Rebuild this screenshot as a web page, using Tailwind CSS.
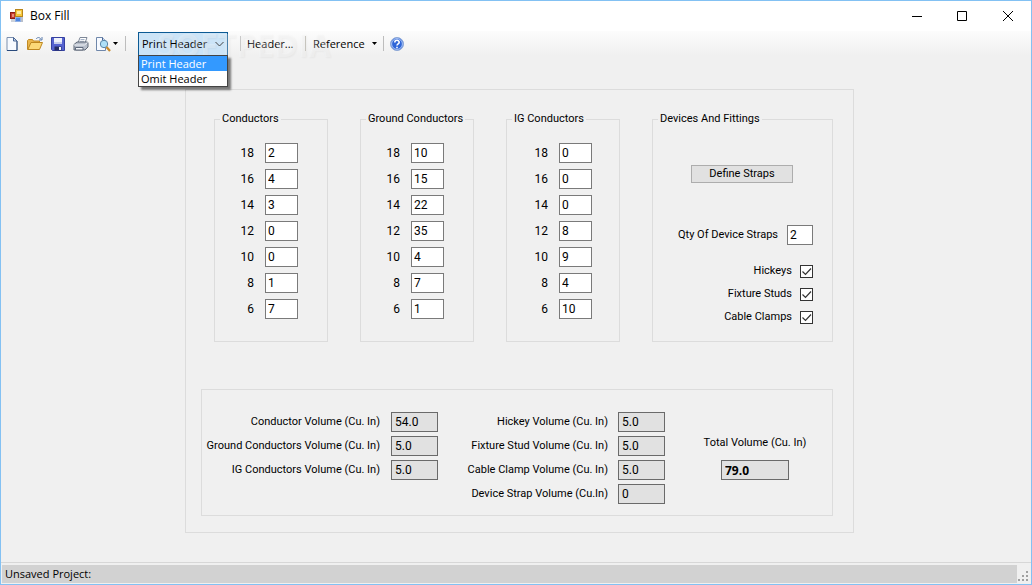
<!DOCTYPE html>
<html lang="en">
<head>
<meta charset="utf-8">
<title>Box Fill</title>
<script src="https://cdn.jsdelivr.net/npm/@tailwindcss/browser@4"></script>
</head>
<body class="bg-[#f0f0f0]">
<div class="flex min-h-screen flex-col border border-[#83c1f3] bg-[#f0f0f0] font-['Roboto','Liberation_Sans',sans-serif] text-[11px] leading-4 text-black">

  <header class="flex h-[30px] items-center bg-white font-['Open_Sans',sans-serif] text-[12px]">
    <svg class="ml-2 size-4 shrink-0" viewBox="0 0 16 16" aria-hidden="true">
      <rect x="1.5" y="4.500" width="5" height="6" fill="#c33a2c" stroke="#8d1d14"/><rect x="3" y="6" width="2" height="3" fill="#e98b7c"/>
      <rect x="2" y="11" width="4" height="3" fill="#cdd2da"/>
      <rect x="11" y="9" width="3" height="5" fill="#b9bfca"/>
      <rect x="6.500" y="9.500" width="5" height="4" fill="#4f86e0" stroke="#8fb0e6"/>
      <rect x="6.500" y="1.500" width="7" height="7" fill="#f6c73c" stroke="#b8861b"/><rect x="8" y="3" width="4" height="3" fill="#fdeaa0"/>
    </svg>
    <h1 class="ml-[5px] grow">Box Fill</h1>
    <button type="button" aria-label="Minimize" class="flex h-full w-[46px] items-center justify-center"><svg class="size-[11px]" viewBox="0 0 11 11" stroke="#000" fill="none"><path d="M1 5.500h10"/></svg></button>
    <button type="button" aria-label="Maximize" class="flex h-full w-[46px] items-center justify-center"><svg class="size-[11px]" viewBox="0 0 11 11" stroke="#000" fill="none"><path d="M.5 .5h9v9h-9z"/></svg></button>
    <button type="button" aria-label="Close" class="flex h-full w-[46px] items-center justify-center"><svg class="size-[11px]" viewBox="0 0 11 11" stroke="#000" fill="none"><path d="M0 0l10 10M10 0l-10 10"/></svg></button>
  </header>

  <nav class="relative flex h-[25px] items-center bg-linear-to-b from-[#fcfcfc] to-[#f0f0f0] font-['Open_Sans',sans-serif]" aria-label="Toolbar">
    <div class="pointer-events-none absolute left-[156px] top-0 z-20 text-[32px] leading-[28px] font-bold text-white/25 text-shadow-[1px_1px_2px_rgb(0_0_0/0.04)]" aria-hidden="true">SOFTPEDIA</div>
    <div class="ml-[3px] flex gap-[7px]">
      <button type="button" aria-label="New" class="size-4"><svg viewBox="0 0 16 16"><path d="M3 1.500h6.500l3.500 3.500v9.500H3z" fill="#f7faff" stroke="#7b8fae"/><path d="M13 5v9.500H3" fill="none" stroke="#294a7c"/><path d="M9.500 1.500V5H13z" fill="#c7d6ec" stroke="#4a6795"/></svg></button>
      <button type="button" aria-label="Open" class="size-4"><svg viewBox="0 0 16 16"><path d="M.5 13.500v-9l1-1h4l1 1.500h6v3" fill="#e9b54c" stroke="#c28a23"/><path d="M.8 13.500L4 6.500h11.500l-3 7z" fill="#fbd877" stroke="#bd861f"/><path d="M9 3c1.500-2 4-2 5 .5M15 1v3h-3" fill="none" stroke="#5f7fae"/></svg></button>
      <button type="button" aria-label="Save" class="size-4"><svg viewBox="0 0 16 16"><path d="M1.500 1.500h13v13h-12l-1-1z" fill="#5562d0" stroke="#3540a0"/><path d="M4 2h8v6H4z" fill="#eef1fb"/><path d="M4 6h8v2H4z" fill="#c4cbec"/><path d="M4.500 10.500h7v4h-7z" fill="#252c66"/><path d="M9 11h2v3H9z" fill="#f1f2f8"/></svg></button>
      <button type="button" aria-label="Print" class="size-4"><svg viewBox="0 0 16 16"><path d="M5 7l2-5.500h7L12 7z" fill="#fff" stroke="#7d8797"/><path d="M7.500 3.500h4M7 5.300h4" stroke="#a5b3c8"/><path d="M1 8.500l3-2.500h10.500l.5 1v4l-3 3H1z" fill="#b8bfcb" stroke="#5f6876"/><path d="M1 9h10.500l3-2.500" fill="none" stroke="#eef1f5"/><path d="M2.500 11.500H10v2.500H2.500z" fill="#f5f7fa" stroke="#606b7d"/></svg></button>
      <button type="button" aria-label="Print preview" class="-ml-px flex h-4 items-center"><svg class="size-4" viewBox="0 0 16 16"><path d="M1.500 1.500h6l3 3v10h-9z" fill="#f7faff" stroke="#6f87aa"/><path d="M7.500 1.500v3h3" fill="#cddaf0" stroke="#4a6795"/><circle cx="9" cy="8" r="3.700" fill="#aee0f8" stroke="#5a86a8"/><path d="M11.500 11l3.500 4" stroke="#c78a2c" stroke-width="2.200"/></svg><svg class="ml-0.5 h-[3px] w-[5px]" viewBox="0 0 5 3"><path d="M0 0h5L2.500 3z"/></svg></button>
    </div>
    <div class="ml-[7px] h-[15px] w-px bg-[#bdbdbd]"></div>
    <div class="relative ml-3 h-6 w-[90px]">
      <select aria-label="Header mode" class="h-6 w-full appearance-none border border-[#0c5a94] bg-[#cce4f7] pl-[3px] text-[11px]">
        <option selected>Print Header</option>
        <option>Omit Header</option>
      </select>
      <svg class="pointer-events-none absolute right-1 top-[9px] h-[7px] w-[9px]" viewBox="0 0 9 7" fill="none" stroke="#444"><path d="M.5 1l4 4 4-4"/></svg>
      <ul role="listbox" aria-label="Header mode options" class="absolute left-0 top-[23px] z-30 w-full border border-[#444] bg-white shadow-[3px_3px_2px_rgba(0,0,0,0.5)]">
        <li role="option" aria-selected="true" class="h-[15px] bg-[#3399ff] pl-0.5 leading-[15px] text-white">Print Header</li>
        <li role="option" aria-selected="false" class="h-[15px] pl-0.5 leading-[15px]">Omit Header</li>
      </ul>
    </div>
    <div class="ml-3 h-[15px] w-px bg-[#bdbdbd]"></div>
    <button type="button" class="ml-1.5 w-[50px] whitespace-nowrap text-left">Header...</button>
    <div class="ml-2 h-[15px] w-px bg-[#bdbdbd]"></div>
    <button type="button" class="ml-[7px] flex w-16 items-center justify-between whitespace-nowrap">Reference<svg class="h-[3px] w-[5px] shrink-0" viewBox="0 0 5 3"><path d="M0 0h5L2.500 3z"/></svg></button>
    <div class="ml-1.5 h-[15px] w-px bg-[#bdbdbd]"></div>
    <button type="button" aria-label="Help" class="ml-[5px] size-4"><svg viewBox="0 0 16 16"><circle cx="8" cy="8" r="6.500" fill="#2f66d8" stroke="#8fa9d6"/><circle cx="8" cy="8" r="5.400" fill="none" stroke="#cfe0fb" stroke-width=".8"/><path d="M5.800 6.500c0-3 4.400-2.800 4.400-.3C10.200 7.800 8 7.800 8 9.600M8 10.800v1.500" fill="none" stroke="#fff" stroke-width="1.600"/></svg></button>
  </nav>

  <main class="flex grow justify-center pt-[33px] pb-[29px] pl-[7px]">
    <div class="w-[669px] border border-[#dcdcdc] pr-5 pl-7 pt-[21px] pb-4">
      <div class="grid grid-cols-[114px_114px_114px_181px] gap-8">
        <fieldset class="h-[231px] border border-[#dcdcdc]">
          <legend class="ml-[5px] whitespace-nowrap px-0.5">Conductors</legend>
          <div class="mt-4 grid grid-cols-[39px_33px] gap-x-[11px] gap-y-1.5 text-right text-[12px]" data-values="2,4,3,0,0,1,7"></div>
        </fieldset>
        <fieldset class="h-[231px] border border-[#dcdcdc]">
          <legend class="ml-[5px] whitespace-nowrap px-0.5">Ground Conductors</legend>
          <div class="mt-4 grid grid-cols-[39px_33px] gap-x-[11px] gap-y-1.5 text-right text-[12px]" data-values="10,15,22,35,4,7,1"></div>
        </fieldset>
        <fieldset class="h-[231px] border border-[#dcdcdc]">
          <legend class="ml-[5px] whitespace-nowrap px-0.5">IG Conductors</legend>
          <div class="mt-4 grid grid-cols-[41px_33px] gap-x-[11px] gap-y-1.5 text-right text-[12px]" data-values="0,0,0,8,9,4,10"></div>
        </fieldset>
        <fieldset class="h-[231px] border border-[#dcdcdc] pr-[19px]">
          <legend class="ml-[5px] whitespace-nowrap px-0.5">Devices And Fittings</legend>
          <button type="button" class="mt-[38px] ml-[38px] block h-[18px] w-[102px] border border-[#adadad] bg-[#e1e1e1]">Define Straps</button>
          <div class="mt-[42px] flex items-center justify-end gap-[9px]"><label for="straps">Qty Of Device Straps</label><input id="straps" value="2" class="h-5 w-[26px] border border-[#7a7a7a] bg-white pl-0.5 text-[12px]"></div>
          <div class="mt-[18px] grid gap-y-[7px]">
            <label class="flex items-center justify-end gap-2">Hickeys <span class="relative grid size-[13px]"><input type="checkbox" checked class="size-[13px] appearance-none border border-[#333] bg-white"><svg class="pointer-events-none absolute inset-0" viewBox="0 0 13 13" fill="none" stroke="#333" stroke-width="1.200"><path d="M2.500 6.500l3 3 5.500-6"/></svg></span></label>
            <label class="flex items-center justify-end gap-2">Fixture Studs <span class="relative grid size-[13px]"><input type="checkbox" checked class="size-[13px] appearance-none border border-[#333] bg-white"><svg class="pointer-events-none absolute inset-0" viewBox="0 0 13 13" fill="none" stroke="#333" stroke-width="1.200"><path d="M2.500 6.500l3 3 5.500-6"/></svg></span></label>
            <label class="flex items-center justify-end gap-2">Cable Clamps <span class="relative grid size-[13px]"><input type="checkbox" checked class="size-[13px] appearance-none border border-[#333] bg-white"><svg class="pointer-events-none absolute inset-0" viewBox="0 0 13 13" fill="none" stroke="#333" stroke-width="1.200"><path d="M2.500 6.500l3 3 5.500-6"/></svg></span></label>
          </div>
        </fieldset>
      </div>

      <section aria-label="Volumes" class="mt-[47px] -ml-[13px] flex h-[127px] border border-[#dcdcdc] pt-[22px]">
        <div class="grid grid-cols-[178px_47px] content-start items-center gap-x-[11px] gap-y-1 whitespace-nowrap text-right">
          <label for="v1">Conductor Volume (Cu. In)</label><input id="v1" readonly value="54.0" class="h-5 min-w-0 border border-[#6a6a6a] bg-[#e1e1e1] pl-[3px] text-[12px]">
          <label for="v2">Ground Conductors Volume (Cu. In)</label><input id="v2" readonly value="5.0" class="h-5 min-w-0 border border-[#6a6a6a] bg-[#e1e1e1] pl-[3px] text-[12px]">
          <label for="v3">IG Conductors Volume (Cu. In)</label><input id="v3" readonly value="5.0" class="h-5 min-w-0 border border-[#6a6a6a] bg-[#e1e1e1] pl-[3px] text-[12px]">
        </div>
        <div class="grid grid-cols-[170px_47px] content-start items-center gap-x-[10px] gap-y-1 whitespace-nowrap text-right">
          <label for="v4">Hickey Volume (Cu. In)</label><input id="v4" readonly value="5.0" class="h-5 min-w-0 border border-[#6a6a6a] bg-[#e1e1e1] pl-[3px] text-[12px]">
          <label for="v5">Fixture Stud Volume (Cu. In)</label><input id="v5" readonly value="5.0" class="h-5 min-w-0 border border-[#6a6a6a] bg-[#e1e1e1] pl-[3px] text-[12px]">
          <label for="v6">Cable Clamp Volume (Cu. In)</label><input id="v6" readonly value="5.0" class="h-5 min-w-0 border border-[#6a6a6a] bg-[#e1e1e1] pl-[3px] text-[12px]">
          <label for="v7">Device Strap Volume (Cu.In)</label><input id="v7" readonly value="0" class="h-5 min-w-0 border border-[#6a6a6a] bg-[#e1e1e1] pl-[3px] text-[12px]">
        </div>
        <div class="ml-[30px] flex w-[120px] flex-col items-center pt-[23px]">
          <label for="total">Total Volume (Cu. In)</label>
          <input id="total" readonly value="79.0" class="mt-[9px] h-5 w-[68px] border border-[#6a6a6a] bg-[#e1e1e1] pl-[3px] font-['Open_Sans',sans-serif] text-[12px] font-bold">
        </div>
      </section>
    </div>
  </main>

  <footer class="flex border-t border-[#d7d7d7] pt-0.5 pb-px pl-px font-['Open_Sans',sans-serif]">
    <p class="h-[18px] grow bg-[#d2d2d2] pl-[3px] leading-[18px]">Unsaved Project:</p>
    <svg class="h-[18px] w-[14px]" viewBox="0 0 14 18" fill="#a0a0a0" aria-hidden="true"><path d="M9 6h2v2H9zM5 10h2v2H5zM9 10h2v2H9zM1 14h2v2H1zM5 14h2v2H5zM9 14h2v2H9z"/></svg>
  </footer>
</div>
<script>
  const sizes = [18, 16, 14, 12, 10, 8, 6];
  document.querySelectorAll('[data-values]').forEach((grid, g) => {
    grid.dataset.values.split(',').forEach((value, i) => {
      const id = 'c' + g + '-' + sizes[i];
      grid.insertAdjacentHTML('beforeend',
        '<label for="' + id + '" class="leading-5">' + sizes[i] + '</label>' +
        '<input id="' + id + '" value="' + value + '" class="h-5 min-w-0 border border-[#7a7a7a] bg-white pl-0.5">');
    });
  });
</script>
</body>
</html>
